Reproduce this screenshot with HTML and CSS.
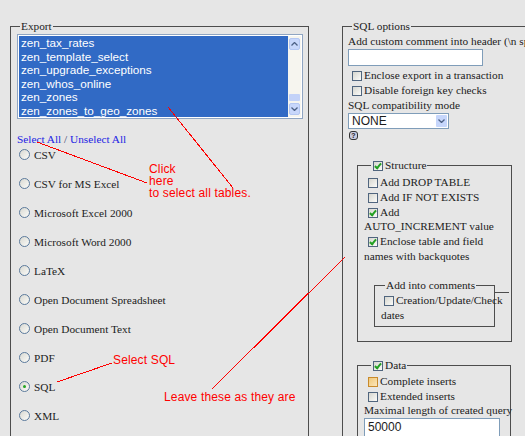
FILE: index.html
```html
<!DOCTYPE html>
<html>
<head>
    <meta charset="utf-8" />
    <title>Export</title>
    <link rel="stylesheet" href="styles.css">
</head>
<body>
    <div class="page">
        <fieldset class="export">
            <legend>Export</legend>
            <div class="listbox">
                <ul class="tables">
                    <li>zen_tax_rates</li>
                    <li>zen_template_select</li>
                    <li>zen_upgrade_exceptions</li>
                    <li>zen_whos_online</li>
                    <li>zen_zones</li>
                    <li>zen_zones_to_geo_zones</li>
                </ul>
                <div class="scroll">
                    <span class="sbtn"><svg width="7" height="4" viewBox="0 0 7 4"><polyline points="0.5,3.5 3.5,0.5 6.5,3.5" /></svg></span>
                    <span class="track"></span>
                    <span class="thumb"></span>
                    <span class="sbtn"><svg width="7" height="4" viewBox="0 0 7 4"><polyline points="0.5,0.5 3.5,3.5 6.5,0.5" /></svg></span>
                </div>
            </div>
            <p class="selall"><a href="#">Select All</a> / <a href="#">Unselect All</a></p>
            <ul class="formats">
                <li><span class="radio"></span>CSV</li>
                <li><span class="radio"></span>CSV for MS Excel</li>
                <li><span class="radio"></span>Microsoft Excel 2000</li>
                <li><span class="radio"></span>Microsoft Word 2000</li>
                <li><span class="radio"></span>LaTeX</li>
                <li><span class="radio"></span>Open Document Spreadsheet</li>
                <li><span class="radio"></span>Open Document Text</li>
                <li><span class="radio"></span>PDF</li>
                <li><span class="radio on"></span>SQL</li>
                <li><span class="radio"></span>XML</li>
            </ul>
        </fieldset>

        <fieldset class="sqlopts">
            <legend>SQL options</legend>
            <div class="line">Add custom comment into header (\n splits lines)</div>
            <span class="textbox"></span>
            <div class="line first"><span class="cb"></span>Enclose export in a transaction</div>
            <div class="line"><span class="cb"></span>Disable foreign key checks</div>
            <div class="line">SQL compatibility mode</div>
            <div class="select">
                <span class="val">NONE</span>
                <span class="drop"><svg width="7" height="4" viewBox="0 0 7 4"><polyline points="0.5,0.5 3.5,3.5 6.5,0.5" /></svg></span>
            </div>
            <span class="help">?</span>

            <fieldset class="sub structure">
                <legend><span class="cb on"></span>Structure</legend>
                <div class="line"><span class="cb"></span>Add DROP TABLE</div>
                <div class="line"><span class="cb"></span>Add IF NOT EXISTS</div>
                <div class="line"><span class="cb on"></span>Add<br>AUTO_INCREMENT value</div>
                <div class="line"><span class="cb on"></span>Enclose table and field<br>names with backquotes</div>

                <fieldset class="sub comments">
                    <legend>Add into comments</legend>
                    <div class="line"><span class="cb"></span>Creation/Update/Check<br>dates</div>
                </fieldset>
            </fieldset>

            <fieldset class="sub data">
                <legend><span class="cb on"></span>Data</legend>
                <div class="line"><span class="cb hover"></span>Complete inserts</div>
                <div class="line"><span class="cb"></span>Extended inserts</div>
                <div class="line">Maximal length of created query</div>
                <span class="textbox num">50000</span>
            </fieldset>
        </fieldset>

        <!-- annotations drawn over the screenshot -->
        <svg class="marks" width="525" height="436" viewBox="0 0 525 436">
            <line x1="37" y1="142" x2="147" y2="183" />
            <line x1="168" y1="107" x2="233" y2="188" />
            <line x1="57" y1="382" x2="112" y2="363" />
            <line x1="212" y1="389" x2="345" y2="257" />
        </svg>
        <div class="note click">Click<br>here<br>to select all tables.</div>
        <div class="note pick">Select SQL</div>
        <div class="note leave">Leave these as they are</div>
    </div>
</body>
</html>
```

FILE: styles.css
```css
body {
    margin: 0;
    background: #e6e6e6;
    font-family: "Liberation Serif", "Times New Roman", serif;
    font-size: 11.3px;
    color: #1c1c1c;
    overflow: hidden;
}

.page {
    position: relative;
    display: flex;
    align-items: flex-start;
    gap: 33px;
    width: 760px;
    height: 436px;
    padding: 19px 0 0 10px;
    box-sizing: border-box;
    overflow: hidden;
}

fieldset {
    margin: 0;
    min-width: 0;
    border: 1px solid #4d4d4d;
}

legend {
    line-height: 15px;
    padding: 0 1px;
}

/* ---- left column ---- */
.export {
    width: 299px;
    box-sizing: border-box;
    padding: 0 5px 40px 6px;
}
    .export legend {
        margin-left: 3px;
    }

.listbox {
    display: flex;
    height: 85px;
    box-sizing: border-box;
    border: 1px solid #8fa5c2;
    padding: 1px;
    background: #fff;
}

.tables {
    flex: 1;
    margin: 0;
    padding: 0 2px;
    list-style: none;
    background: #316ac5;
    color: #fff;
    font-family: "Liberation Sans", Arial, sans-serif;
    font-size: 11.7px;
    line-height: 13.6px;
    overflow: hidden;
}

.scroll {
    width: 13px;
    display: flex;
    flex-direction: column;
    background: #f6f5ef;
    padding: 1px 0;
}
    .scroll .track {
        flex: 1;
    }
    .scroll .thumb {
        height: 7px;
        margin: 0 1px 1px;
        background: #c3d2f8;
        border-radius: 1px;
    }

.sbtn {
    height: 10px;
    margin: 1px;
    display: flex;
    align-items: center;
    justify-content: center;
    background: #c8d7fb;
    border: 1px solid #b4c7f2;
    border-radius: 2px;
}
    .sbtn polyline, .drop polyline {
        fill: none;
        stroke: #4d6185;
        stroke-width: 1.3;
    }

.selall {
    margin: 13px 0 0;
    line-height: 14px;
    color: #3a3a6a;
}
    .selall a {
        color: #2424e4;
        text-decoration: none;
    }

.formats {
    list-style: none;
    margin: 1px 0 0;
    padding: 0;
    display: flex;
    flex-direction: column;
    gap: 14px;
}
    .formats li {
        height: 15px;
        display: flex;
        align-items: center;
    }

.radio {
    width: 11px;
    height: 11px;
    box-sizing: border-box;
    margin: 0 4px 0 2px;
    border: 1px solid #5b7a9c;
    border-radius: 50%;
    background: linear-gradient(135deg, #d9d9d2, #fbfbf8);
    display: flex;
    align-items: center;
    justify-content: center;
}
    .radio.on::before {
        content: "";
        width: 3px;
        height: 3px;
        border-radius: 50%;
        background: #23a323;
    }

/* ---- right column ---- */
.sqlopts {
    width: 200px;
    flex: none;
    padding: 0 5px 40px;
}
    .sqlopts legend {
        margin-left: 4px;
    }

.line {
    line-height: 15px;
    white-space: nowrap;
}
    .line.first {
        margin-top: 2px;
    }

.textbox {
    display: block;
    width: 135px;
    height: 17px;
    box-sizing: border-box;
    border: 1px solid #7f9db9;
    background: #fff;
}
    .textbox.num {
        width: 136px;
        height: 19px;
        padding-left: 3px;
        font-family: "Liberation Sans", Arial, sans-serif;
        font-size: 12px;
        line-height: 17px;
    }

.cb {
    position: relative;
    display: inline-block;
    width: 10px;
    height: 10px;
    box-sizing: border-box;
    margin: 0 2px 0 4px;
    vertical-align: -2px;
    border: 1px solid #50657e;
    background: linear-gradient(135deg, #d6d6cf, #fbfbf9);
}
    .cb.on::after {
        content: "";
        position: absolute;
        left: 2px;
        top: 0;
        width: 2px;
        height: 5px;
        border: solid #22a022;
        border-width: 0 2px 2px 0;
        transform: rotate(40deg);
    }
    .cb.hover {
        border-color: #c88a2c;
        background: linear-gradient(135deg, #f0c878, #fbe6bc);
    }

.select {
    display: flex;
    width: 101px;
    height: 16px;
    box-sizing: border-box;
    border: 1px solid #7f9db9;
    background: #fff;
    font-family: "Liberation Sans", Arial, sans-serif;
    font-size: 12px;
    line-height: 14px;
}
    .select .val {
        flex: 1;
        padding-left: 3px;
    }
    .select .drop {
        width: 11px;
        margin: 1px;
        display: flex;
        align-items: center;
        justify-content: center;
        background: #c6d6fb;
        border-radius: 1px;
    }

.help {
    display: block;
    width: 9px;
    height: 9px;
    box-sizing: border-box;
    margin: 2px 0 0 1px;
    border: 1px solid #333;
    border-radius: 3px;
    background: #c9cbe0;
    font-family: "Liberation Sans", Arial, sans-serif;
    font-size: 7px;
    font-weight: bold;
    line-height: 7px;
    text-align: center;
}

.sub {
    padding: 0 6px;
}
    .sub legend {
        margin-left: 7px;
    }
    .sub legend .cb {
        margin-left: 1px;
    }
    .sub .line {
        line-height: 14.8px;
    }

.structure {
    width: 155px;
    box-sizing: border-box;
    margin: 18px 0 0 9px;
    padding-top: 2px;
    padding-bottom: 14px;
}

.comments {
    position: relative;
    width: 121px;
    box-sizing: border-box;
    margin: 14px 0 0 10px;
    padding-top: 0;
    padding-bottom: 4px;
}
    .comments legend {
        margin-left: 4px;
    }
    .comments .cb {
        margin-left: 3px;
    }
    .comments::after {
        content: "";
        position: absolute;
        left: 100%;
        top: -1px;
        width: 15px;
        border-top: 1px solid #4d4d4d;
    }

.data {
    width: 154px;
    box-sizing: border-box;
    margin: 16px 0 0 9px;
    padding-top: 1px;
    padding-bottom: 30px;
}
    .data .line {
        line-height: 14.4px;
    }

/* ---- red annotations ---- */
.marks {
    position: absolute;
    left: 0;
    top: 0;
    pointer-events: none;
}
    .marks line {
        stroke: #ff0000;
        stroke-width: 1;
        shape-rendering: crispEdges;
    }

.note {
    position: absolute;
    color: #ff0000;
    font-family: "Liberation Sans", Arial, sans-serif;
    font-size: 12px;
    line-height: 12px;
    letter-spacing: 0.15px;
    white-space: nowrap;
}
    .note.click {
        left: 149px;
        top: 163px;
    }
    .note.pick {
        left: 113px;
        top: 354px;
    }
    .note.leave {
        left: 164px;
        top: 391px;
    }
```
